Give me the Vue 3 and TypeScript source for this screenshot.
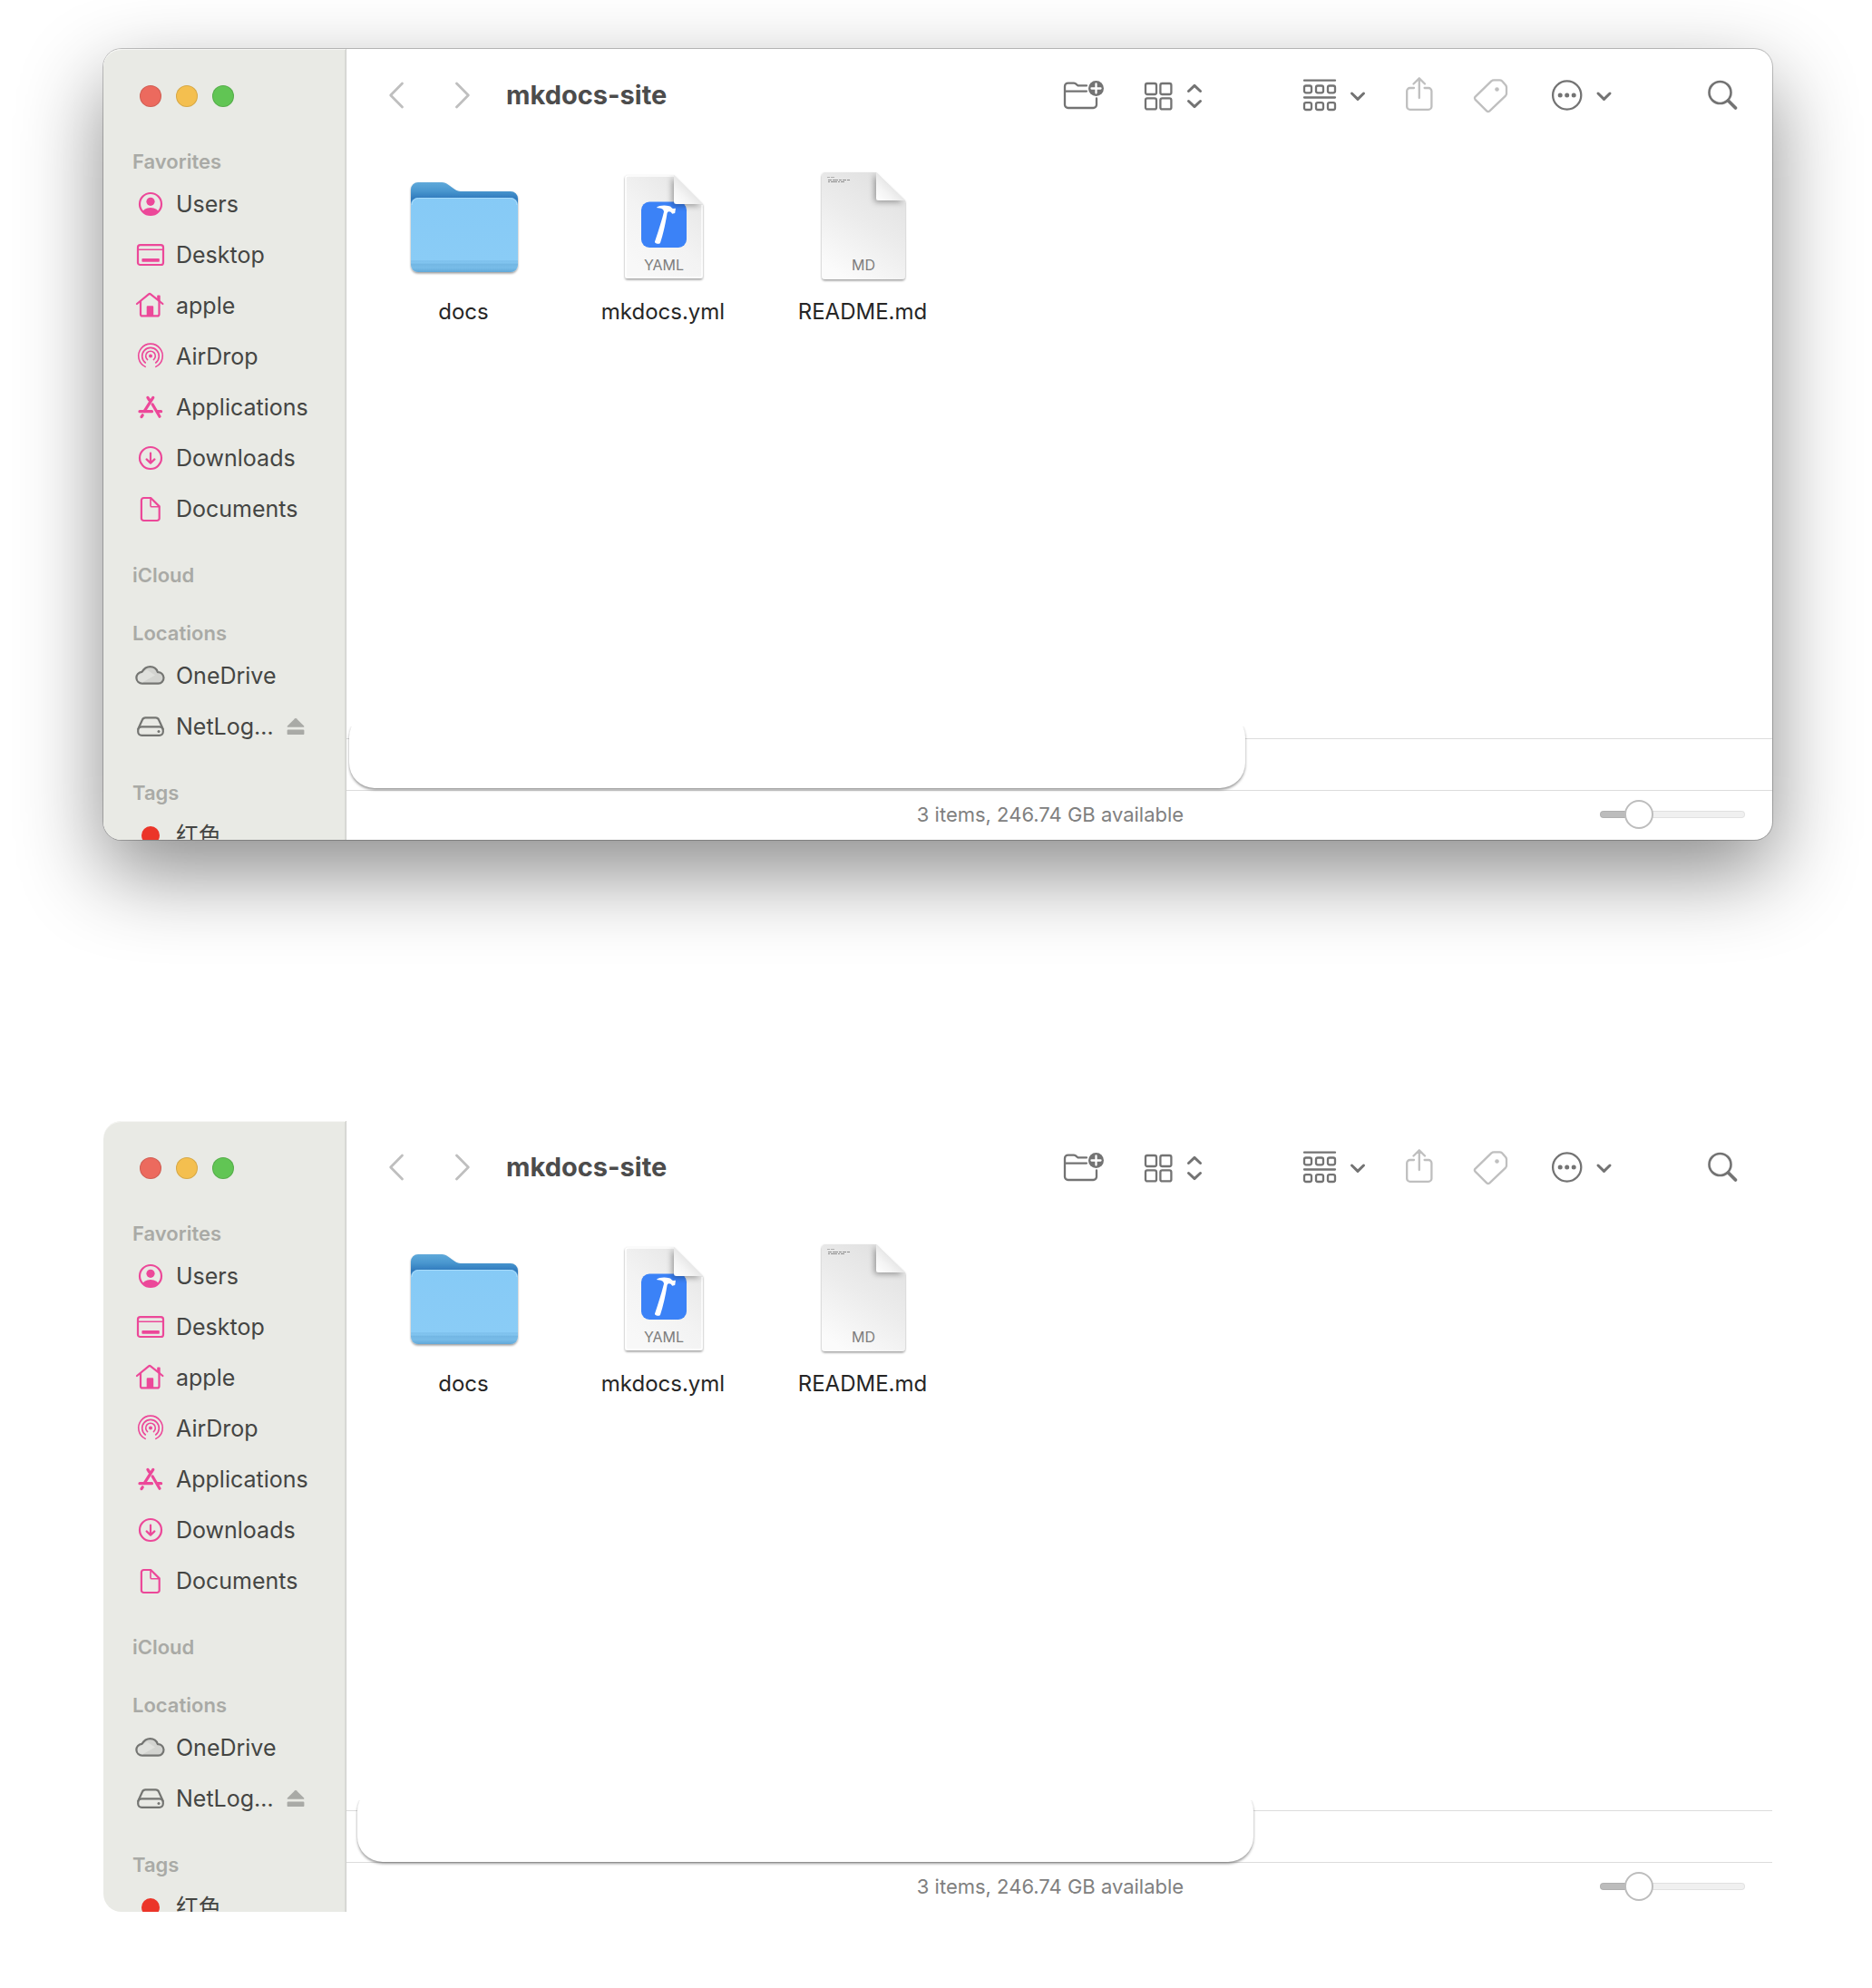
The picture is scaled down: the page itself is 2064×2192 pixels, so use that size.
<script setup lang="ts">
import { ref } from 'vue'

interface SidebarItem {
  icon: string
  label: string
  ejectable?: boolean
}

interface SidebarSection {
  title: string
  items: SidebarItem[]
}

interface FinderWindow {
  id: string
  floating: boolean
  zoom: number
}

const windows = ref<FinderWindow[]>([
  { id: 'floating', floating: true, zoom: 21 },
  { id: 'flat', floating: false, zoom: 21 },
])

const sections: SidebarSection[] = [
  {
    title: 'Favorites',
    items: [
      { icon: 'users', label: 'Users' },
      { icon: 'desktop', label: 'Desktop' },
      { icon: 'home', label: 'apple' },
      { icon: 'airdrop', label: 'AirDrop' },
      { icon: 'apps', label: 'Applications' },
      { icon: 'downloads', label: 'Downloads' },
      { icon: 'documents', label: 'Documents' },
    ],
  },
  { title: 'iCloud', items: [] },
  {
    title: 'Locations',
    items: [
      { icon: 'cloud', label: 'OneDrive' },
      { icon: 'drive', label: 'NetLog…', ejectable: true },
    ],
  },
  { title: 'Tags', items: [{ icon: 'tag-red', label: '红色' }] },
]

const files = [
  { kind: 'folder', name: 'docs' },
  { kind: 'yaml', name: 'mkdocs.yml' },
  { kind: 'md', name: 'README.md' },
]
</script>

<template>
  <div class="page">
    <svg class="defs" aria-hidden="true">
      <defs>
        <linearGradient id="folder-back" x1="0" y1="0" x2="0" y2="1">
          <stop offset="0" stop-color="#5fa9da" />
          <stop offset="0.2" stop-color="#4b98d0" />
          <stop offset="0.4" stop-color="#2f7abd" />
          <stop offset="1" stop-color="#2f7abd" />
        </linearGradient>
        <linearGradient id="folder-front" x1="0" y1="0" x2="0" y2="1">
          <stop offset="0" stop-color="#86caf6" />
          <stop offset="0.84" stop-color="#8accf6" />
          <stop offset="0.85" stop-color="#7dc0ec" />
          <stop offset="0.88" stop-color="#82c5f0" />
          <stop offset="0.89" stop-color="#72b6e3" />
          <stop offset="0.94" stop-color="#78bce8" />
          <stop offset="1" stop-color="#62a8d8" />
        </linearGradient>
        <linearGradient id="paper-yaml" x1="1" y1="0" x2="0.3" y2="1">
          <stop offset="0" stop-color="#e2e2e2" />
          <stop offset="0.6" stop-color="#f3f3f3" />
          <stop offset="1" stop-color="#f8f8f8" />
        </linearGradient>
        <linearGradient id="paper-md" x1="0.8" y1="0" x2="0.3" y2="1">
          <stop offset="0" stop-color="#e0e0e0" />
          <stop offset="0.5" stop-color="#ececec" />
          <stop offset="1" stop-color="#fbfbfb" />
        </linearGradient>
        <linearGradient id="fold" x1="0" y1="1" x2="0.6" y2="0.4">
          <stop offset="0" stop-color="#ffffff" />
          <stop offset="0.5" stop-color="#f4f4f4" />
          <stop offset="1" stop-color="#e2e2e2" />
        </linearGradient>
        <filter id="drop" x="-10%" y="-10%" width="120%" height="125%">
          <feDropShadow dx="0" dy="1.5" stdDeviation="1.2" flood-opacity="0.4" />
        </filter>
        <filter id="fold-shadow" x="-60%" y="-40%" width="200%" height="200%">
          <feDropShadow dx="-2" dy="2" stdDeviation="3" flood-opacity="0.34" />
        </filter>
        <clipPath id="avatar"><circle cx="16" cy="16" r="12" /></clipPath>
        <clipPath id="yaml-clip"><path d="M25 7H76L108 39V118a3 3 0 0 1-3 3H25a3 3 0 0 1-3-3V10a3 3 0 0 1 3-3z" /></clipPath>
        <clipPath id="md-clip"><path d="M23 4H79L111 35V118a4 4 0 0 1-4 4H23a4 4 0 0 1-4-4V8a4 4 0 0 1 4-4z" /></clipPath>
      </defs>
    </svg>

    <section
      v-for="win in windows"
      :key="win.id"
      class="window"
      :class="{ floating: win.floating }"
      aria-label="mkdocs-site"
    >
      <aside class="sidebar">
        <div class="lights">
          <button class="light close" aria-label="Close"></button>
          <button class="light minimize" aria-label="Minimize"></button>
          <button class="light maximize" aria-label="Zoom"></button>
        </div>
        <nav class="places">
          <div v-for="section in sections" :key="section.title" class="section">
            <h2 class="section-title">{{ section.title }}</h2>
            <div v-for="item in section.items" :key="item.label" class="place">
              <a class="place-link" href="#">
                <svg class="place-icon" :class="item.icon" viewBox="0 0 32 32" aria-hidden="true">
                  <template v-if="item.icon === 'users'">
                    <circle cx="16" cy="16" r="12" />
                    <g clip-path="url(#avatar)">
                      <circle class="solid" cx="16" cy="13.3" r="4.6" />
                      <ellipse class="solid" cx="16" cy="26.4" rx="9.2" ry="6.4" />
                    </g>
                  </template>
                  <template v-else-if="item.icon === 'desktop'">
                    <rect x="2" y="5.2" width="28" height="21.8" rx="2.6" />
                    <path d="M2 10.3H30" stroke-width="1.6" />
                    <rect class="solid" x="6.4" y="20" width="19.4" height="3.8" rx="0.8" />
                  </template>
                  <template v-else-if="item.icon === 'home'">
                    <path d="M1 14L14 3.4a1.6 1.6 0 0 1 2 0L29.4 14" />
                    <path d="M5 11V25.400a2 2 0 0 0 2 2H23.500a2 2 0 0 0 2-2V11" />
                    <path class="solid" d="M11.700 27V17.200a1 1 0 0 1 1-1h5.500a1 1 0 0 1 1 1V27zM23.200 9V5.200a0.800 0.800 0 0 1 0.800-0.800h1.900a0.800 0.800 0 0 1 0.800 0.800V12z" />
                  </template>
                  <template v-else-if="item.icon === 'airdrop'">
                    <circle class="solid" cx="16" cy="15.500" r="2" />
                    <path stroke-width="1.600" d="M12.600 19.600a5.300 5.300 0 1 1 6.800 0M10.300 23a9.300 9.300 0 1 1 11.400 0M10.200 27.400a13.300 13.300 0 1 1 11.600 0" />
                  </template>
                  <template v-else-if="item.icon === 'apps'">
                    <path stroke-width="3.200" d="M18.800 5.400L9 20.700M12.900 5.400L14.600 8M18.200 13L26 26.200M4 20.700H17.500M24 20.700H27.600M7.200 24.800L6 26.600" />
                  </template>
                  <template v-else-if="item.icon === 'downloads'">
                    <circle cx="16" cy="16" r="12" />
                    <path d="M16 10.500V21.300M11.600 17.400L16 21.600L20.400 17.400" />
                  </template>
                  <template v-else-if="item.icon === 'documents'">
                    <path d="M8.500 4H16.200L25.700 13.400V26.400a2.600 2.600 0 0 1-2.600 2.600H8.500a2.600 2.600 0 0 1-2.600-2.600V6.600A2.600 2.600 0 0 1 8.500 4z" />
                    <path stroke-width="1.600" d="M16 4.400V12.400a1.400 1.400 0 0 0 1.400 1.400H25.400" />
                  </template>
                  <template v-else-if="item.icon === 'cloud'">
                    <path fill="#d3d4d0" d="M7 24.700a6.300 6.300 0 0 1-0.500-12.800C8.600 8.400 12 6.200 15.500 6.200c4 0 7.200 2.400 8.400 5.900a6.300 6.300 0 0 1 0.600 12.600z" />
                    <path fill="#e0e1dd" stroke="none" d="M7 23.400L21 15.500L12 9.500L7 12.900L2 16V21z" />
                  </template>
                  <template v-else-if="item.icon === 'drive'">
                    <path d="M2.200 19L7 8.500a3.600 3.600 0 0 1 3.300-2.200H21.700A3.600 3.600 0 0 1 25 8.500L29.800 19" />
                    <rect x="2.200" y="16.400" width="27.600" height="9.400" rx="4" />
                    <circle class="solid" cx="25" cy="21.400" r="1.500" />
                  </template>
                  <circle v-else class="solid" cx="16" cy="16" r="10" />
                </svg>
                <span>{{ item.label }}</span>
              </a>
              <button v-if="item.ejectable" class="eject" aria-label="Eject">
                <svg viewBox="0 0 20 20" width="20" height="20" aria-hidden="true">
                  <path d="M9.200 1.200a1.200 1.200 0 0 1 1.600 0L19.200 9.600c0.400 0.600 0.200 1.100-0.500 1.100H1.300c-0.700 0-0.900-0.500-0.500-1.100z" />
                  <rect x="0.600" y="13.500" width="18.800" height="5.600" rx="1.200" />
                </svg>
              </button>
            </div>
          </div>
        </nav>
      </aside>

      <div class="main">
        <header class="toolbar">
          <button class="tool faint" aria-label="Back">
            <svg viewBox="0 0 16 40" width="16" height="40"><path stroke-width="2.800" d="M14.500 7L1.700 20L14.500 33" /></svg>
          </button>
          <button class="tool faint forward" aria-label="Forward">
            <svg viewBox="0 0 16 40" width="16" height="40"><path stroke-width="2.800" d="M1.500 7L14.300 20L1.500 33" /></svg>
          </button>
          <h1 class="title">mkdocs-site</h1>

          <button class="tool new-folder" aria-label="New Folder">
            <svg viewBox="0 0 44 40" width="44" height="40">
              <path d="M25 9.400H15.500L12.700 7.200a3 3 0 0 0-1.900-0.600H4.600A3.600 3.600 0 0 0 1 10.200V30.400A3.600 3.600 0 0 0 4.600 34H32.400A3.600 3.600 0 0 0 36 30.400V23.500M1 15.600H25" />
              <circle class="fill" cx="35.500" cy="12.500" r="8.500" />
              <path class="cut" d="M35.500 7.500V17.500M30.500 12.500H40.500" />
            </svg>
          </button>
          <button class="tool view" aria-label="View as icons">
            <svg viewBox="0 0 64 40" width="64" height="40">
              <g>
                <rect x="1" y="7" width="12" height="12" rx="2" />
                <rect x="17.400" y="7" width="12" height="12" rx="2" />
                <rect x="1" y="23.400" width="12" height="12" rx="2" />
                <rect x="17.400" y="23.400" width="12" height="12" rx="2" />
              </g>
              <path stroke-width="3" d="M48.500 15.500L55 9.400L61.500 15.500M48.500 26.500L55 32.600L61.500 26.500" />
            </svg>
          </button>
          <button class="tool group" aria-label="Group items">
            <svg viewBox="0 0 68 40" width="68" height="40">
              <path d="M1 3.700H35M1 22.500H35" />
              <g>
                <rect x="1" y="9.500" width="8" height="7.800" rx="2" />
                <rect x="14" y="9.500" width="8" height="7.800" rx="2" />
                <rect x="27" y="9.500" width="8" height="7.800" rx="2" />
                <rect x="1" y="28.200" width="8" height="7.800" rx="2" />
                <rect x="14" y="28.200" width="8" height="7.800" rx="2" />
                <rect x="27" y="28.200" width="8" height="7.800" rx="2" />
              </g>
              <path stroke-width="3" d="M53.500 18L60 24.400L66.500 18" />
            </svg>
          </button>
          <button class="tool faint share" aria-label="Share">
            <svg viewBox="0 0 30 40" width="30" height="40">
              <path d="M9 12H4.600A3.400 3.400 0 0 0 1.200 15.400V32.400A3.400 3.400 0 0 0 4.600 35.800H25A3.400 3.400 0 0 0 28.400 32.400V15.400A3.400 3.400 0 0 0 25 12H20.600M14.800 23V1.500M8.500 7.500L14.800 1.400L21 7.500" />
            </svg>
          </button>
          <button class="tool faint tag" aria-label="Edit Tags">
            <svg viewBox="0 0 38 40" width="38" height="40">
              <path d="M19.600 4.200Q20.500 3.300 22 3.300H28.500Q30 3.300 31 4.300L35 8.800Q36 10 36 11.500V18Q36 19.500 35 20.600L17.400 37.400Q15.800 38.700 14.200 37.400L1.400 24.600Q0.300 23.200 1.400 21.800Z" />
              <circle class="fill" cx="25.500" cy="13.500" r="2.300" />
            </svg>
          </button>
          <button class="tool more" aria-label="Actions">
            <svg viewBox="0 0 66 40" width="66" height="40">
              <circle cx="16.700" cy="20" r="15.600" />
              <circle class="fill" cx="9.200" cy="20" r="2.500" />
              <circle class="fill" cx="16.700" cy="20" r="2.500" />
              <circle class="fill" cx="24.200" cy="20" r="2.500" />
              <path stroke-width="3" d="M51 18L57.500 24.400L64 18" />
            </svg>
          </button>
          <button class="tool search" aria-label="Search">
            <svg viewBox="0 0 33 40" width="33" height="40">
              <circle cx="13.500" cy="17" r="12" stroke-width="2.600" />
              <path stroke-width="3.800" d="M22.500 26L30.500 34" />
            </svg>
          </button>
        </header>

        <div class="files">
          <a v-for="file in files" :key="file.name" class="file" href="#">
            <svg class="file-icon" viewBox="0 0 128 128" aria-hidden="true">
              <g v-if="file.kind === 'folder'" filter="url(#drop)">
                <path fill="url(#folder-back)" d="M6 25V23a8 8 0 0 1 8-8H40c3 0 5 1 7 2.500L54 22.500c2 1.500 4 2.500 7 2.500H116a8 8 0 0 1 8 8V60H6z" />
                <rect fill="url(#folder-front)" x="6" y="32" width="118" height="82" rx="8" />
                <path fill="none" stroke="#a8dbfb" stroke-width="1" d="M7 40a7.500 7.500 0 0 1 7.500-7.500H115.500A7.500 7.500 0 0 1 123 40" />
              </g>
              <g v-else-if="file.kind === 'yaml'">
                <path filter="url(#drop)" fill="url(#paper-yaml)" d="M25 7H76L108 39V118a3 3 0 0 1-3 3H25a3 3 0 0 1-3-3V10a3 3 0 0 1 3-3z" />
                <path fill="none" stroke="#ffffff" stroke-width="1.400" d="M76 8H25.500a2.500 2.500 0 0 0-2.500 2.500V117.500a2.500 2.500 0 0 0 2.500 2.500H104.500a2.500 2.500 0 0 0 2.500-2.500V40" />
                <rect fill="#3b82f7" x="40" y="36.500" width="50" height="50.500" rx="9" />
                <path fill="#ffffff" d="M56.700 43C60 40.500 65 40 71 41.200C73 41.700 73.700 43.700 75 43.900L78 43.700L77.200 49L74.200 49.700L72.600 47.700C70.700 46.700 69.300 47 68.600 49C66.700 61 64.300 71.500 61 81.700C59.800 83.800 55.500 82.800 54.900 80.700C58.500 70 62 59.500 65 47.500C64.800 44.600 62 43.200 56.700 43z" />
                <g clip-path="url(#yaml-clip)">
                  <path filter="url(#fold-shadow)" fill="url(#fold)" d="M76 7L108 39H79a3 3 0 0 1-3-3z" />
                </g>
                <text class="kind" x="65" y="112">YAML</text>
              </g>
              <g v-else>
                <path filter="url(#drop)" fill="url(#paper-md)" d="M23 4H79L111 35V118a4 4 0 0 1-4 4H23a4 4 0 0 1-4-4V8a4 4 0 0 1 4-4z" />
                <g fill="none" stroke="#8c8c8c" stroke-width="1">
                  <path stroke-dasharray="3 1 4 1" d="M25 9.500H34" stroke="#b0b0b0" />
                  <path stroke-dasharray="4 1 6 1 3 1" d="M26 12.500H50" />
                  <path stroke-dasharray="2 1 7 1" d="M26 14.500H44" />
                </g>
                <g clip-path="url(#md-clip)">
                  <path filter="url(#fold-shadow)" fill="url(#fold)" d="M79 4L111 35H82a3 3 0 0 1-3-3z" />
                </g>
                <text class="kind" x="65" y="112">MD</text>
              </g>
            </svg>
            <span class="file-name">{{ file.name }}</span>
          </a>
        </div>

        <div class="path-bar"><div class="cover"></div></div>

        <footer class="status-bar">
          <p class="status">3 items, 246.74 GB available</p>
          <input
            v-model.number="win.zoom"
            class="slider"
            type="range"
            min="0"
            max="100"
            aria-label="Icon size"
          />
        </footer>
      </div>
    </section>
  </div>
</template>

<style>
body {
  background: #ffffff;
}
</style>

<style scoped>
.page {
  display: flex;
  flex-direction: column;
  gap: 310px;
  padding: 54px 110px 84px 114px;
  overflow: hidden;
  background: #ffffff;
  font-family: Inter, "Noto Sans CJK SC", sans-serif;
}

.defs {
  position: absolute;
  width: 0;
  height: 0;
}

.window {
  display: flex;
  border-radius: 20px;
  background: #ffffff;
}

.window.floating {
  box-shadow:
    0 0 0 1px rgba(0, 0, 0, 0.22),
    0 36px 92px rgba(0, 0, 0, 0.46);
}

button {
  padding: 0;
  border: 0;
  background: none;
}

a {
  color: inherit;
  text-decoration: none;
}

/* The sidebar takes its height from the file pane and clips what does not fit. */
.sidebar {
  flex: none;
  box-sizing: border-box;
  width: 268px;
  contain: size;
  overflow: hidden;
  border-right: 1px solid #cfd0cc;
  border-radius: 20px 0 0 20px;
  background: #e9eae5;
  box-shadow: inset 0 1px 0 #f6f6f4, inset -2px 0 2px -1px rgba(0, 0, 0, 0.06);
}

.lights {
  display: flex;
  align-items: center;
  gap: 16px;
  height: 104px;
  padding: 0 0 1px 40px;
  box-sizing: border-box;
  margin-bottom: 1px;
}

.light {
  width: 24px;
  height: 24px;
  border-radius: 50%;
  box-shadow: inset 0 0 0 1px rgba(0, 0, 0, 0.12);
}

.close {
  background: #ec6a5e;
}

.minimize {
  background: #f4bf4f;
}

.maximize {
  background: #61c554;
}

.places {
  display: flex;
  flex-direction: column;
  gap: 26px;
  padding-left: 32px;
}

.section-title {
  margin: 0;
  color: #a9aaa6;
  font-size: 22px;
  font-weight: 600;
  line-height: 38px;
}

.place {
  display: flex;
  align-items: center;
  justify-content: space-between;
  padding-right: 45px;
}

.place-link {
  display: flex;
  align-items: center;
  gap: 12px;
  padding-left: 4px;
  color: #444543;
  font-size: 25px;
  line-height: 56px;
  white-space: nowrap;
}

.place-icon {
  flex: none;
  width: 32px;
  height: 32px;
  overflow: visible;
  fill: none;
  stroke: #ec4899;
  stroke-width: 2.200;
  stroke-linecap: round;
  stroke-linejoin: round;
  color: #ec4899;
}

.place-icon .solid {
  fill: currentColor;
  stroke: none;
}

.place-icon.cloud,
.place-icon.drive {
  stroke: #747572;
  color: #747572;
}

.place-icon.tag-red {
  color: #eb3529;
}

.eject {
  display: flex;
  fill: #a9aaa6;
}

.main {
  display: flex;
  flex: 1;
  flex-direction: column;
  min-width: 0;
}

.toolbar {
  display: flex;
  align-items: center;
  height: 102px;
  padding: 0 38px 0 47px;
  box-sizing: border-box;
}

.tool {
  display: flex;
  flex: none;
  color: #737373;
}

.tool svg {
  overflow: visible;
  fill: none;
  stroke: currentColor;
  stroke-width: 2.300;
  stroke-linecap: round;
  stroke-linejoin: round;
}

.tool .fill {
  fill: currentColor;
  stroke: none;
}

.tool .cut {
  stroke: #ffffff;
}

.tool.faint {
  color: #bfbfbf;
}

.forward {
  margin-left: 57px;
}

.title {
  margin: 0 auto 0 40px;
  color: #4c4c4c;
  font-size: 29px;
  font-weight: 700;
  line-height: 40px;
}

.view,
.share,
.tag {
  margin-left: 45px;
}

.group {
  margin-left: 111px;
}

.more {
  margin-left: 48px;
}

.search {
  margin-left: 106px;
}

.files {
  display: flex;
  flex-wrap: wrap;
  align-content: flex-start;
  box-sizing: border-box;
  min-height: 658px;
  padding: 30px 19px 0;
}

.file {
  display: flex;
  flex-direction: column;
  align-items: center;
  gap: 14px;
  width: 220px;
}

.file-icon {
  width: 128px;
  height: 128px;
}

.kind {
  fill: #7d7d7d;
  font-size: 16px;
  text-anchor: middle;
}

.file-name {
  color: #262626;
  font-size: 24px;
  line-height: 32px;
}

.path-bar {
  position: relative;
  box-sizing: border-box;
  height: 57px;
  border-top: 1px solid #dcdcdc;
}

/* A blank rounded panel laid over the path bar. */
.cover {
  position: absolute;
  bottom: 0;
  left: 12px;
  width: 63%;
  max-width: 988px;
  height: 84px;
  border-radius: 28px;
  background: #ffffff;
  box-shadow: 0 2px 3px rgba(0, 0, 0, 0.4);
  clip-path: inset(16px -8px -8px -8px);
}

.floating .cover {
  bottom: 2px;
  left: 3px;
}

.status-bar {
  display: grid;
  grid-template-columns: 1fr auto 1fr;
  align-items: center;
  box-sizing: border-box;
  height: 55px;
  padding: 0 30px 2px 10px;
  border-top: 1px solid #dcdcdc;
}

.status {
  grid-column: 2;
  margin: 0;
  color: #808080;
  font-size: 22px;
  line-height: 32px;
}

.slider {
  justify-self: end;
  width: 160px;
  height: 32px;
  margin: 0;
  appearance: none;
  background: transparent;
}

.slider::-webkit-slider-runnable-track {
  height: 8px;
  border-radius: 4px;
  background: linear-gradient(90deg, #bcbcbc 27%, #f0f0f0 27%);
  box-shadow: inset 0 0 0 1px rgba(0, 0, 0, 0.06);
}

.slider::-webkit-slider-thumb {
  width: 32px;
  height: 32px;
  margin-top: -12px;
  border: 2px solid #bdbdbd;
  border-radius: 50%;
  background: #ffffff;
  appearance: none;
  box-sizing: border-box;
}
</style>
